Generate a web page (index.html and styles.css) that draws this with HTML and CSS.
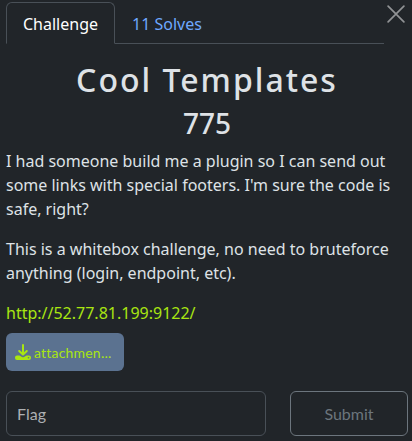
FILE: index.html
```html
<!DOCTYPE html>
<html lang="en">
<head>
<meta charset="utf-8">
<title>Cool Templates</title>
<link rel="stylesheet" href="styles.css">
</head>
<body>
<main class="modal">
  <button class="close" aria-label="Close"><svg viewBox="0 0 16 16"><path d="M1 1l14 14M15 1L1 15"/></svg></button>
  <nav class="tabs"><a class="tab active">Challenge</a><a class="tab">11 Solves</a></nav>
  <h2 class="name">Cool Templates</h2>
  <h3 class="value">775</h3>
  <div class="description">
    <p>I had someone build me a plugin so I can send out<br>some links with special footers. I'm sure the code is<br>safe, right?</p>
    <p>This is a whitebox challenge, no need to bruteforce<br>anything (login, endpoint, etc).</p>
    <p class="link">http://52.77.81.199:9122/</p>
  </div>
  <a class="file"><svg viewBox="0 0 16 16"><path class="arrow" d="M8 1v9M4.200 7L8 10.600 11.800 7"/><path fill-rule="evenodd" d="M2 11.500h2.500L7 13q1 .5 2 0l2.500-1.500H14a2 2 0 0 1 2 2v.5a2 2 0 0 1-2 2H2a2 2 0 0 1-2-2v-.5a2 2 0 0 1 2-2zM13.500 13a.8.8 0 1 0 0 1.600.8.8 0 0 0 0-1.600z"/></svg><span>attachmen...</span></a>
  <form class="submission"><input class="flag" placeholder="Flag" aria-label="Flag"><button class="submit" type="button">Submit</button></form>
</main>
</body>
</html>
```
FILE: styles.css
```css
* { box-sizing: border-box; }
body { margin: 0; background: #212529; color: #dee2e6; font: 16px/24px "Noto Sans", sans-serif; }
.modal { position: relative; width: 412px; height: 441px; padding: 2px 4px 0 6px; overflow: hidden; }
.close { position: absolute; top: 5px; right: 7px; width: 18px; height: 18px; padding: 0; border: 0; background: none; }
.close svg { display: block; width: 18px; height: 18px; fill: none; stroke: #919395; stroke-width: 1.5; stroke-linecap: round; }
.tabs { display: flex; width: 378px; height: 42px; border-bottom: 1px solid #495057; }
.tab { height: 42px; padding: 10px 17px; color: #6ea8fe; }
.active { padding: 9px 16px; border: 1px solid #495057; border-bottom-color: #212529; border-radius: 6px 6px 0 0; background: #212529; color: #fff; }
.name { margin: 17px 0 0; text-align: center; font: 500 32px/38px "Noto Sans", sans-serif; letter-spacing: 2px; }
.value { margin: 7px 0 9px; text-align: center; font: 500 28px/34px "Noto Sans", sans-serif; }
.description p { margin: 0 0 16px; white-space: nowrap; }
.description .link { margin-bottom: 8px; color: #a9e611; }
.file { display: flex; align-items: center; gap: 3px; width: 118px; height: 38px; padding: 0 9px; border-radius: 6px; background: #5b7290; color: #a9e611; font: 14px/21px Lato, sans-serif; letter-spacing: .2px; }
.file svg { width: 16px; height: 16px; fill: currentColor; }
.arrow { fill: none; stroke: currentColor; stroke-width: 2; stroke-linecap: round; stroke-linejoin: round; }
.submission { display: grid; grid-template-columns: 260px 118px; gap: 24px; margin-top: 20px; }
.flag, .submit { height: 45px; border: 1px solid #495057; border-radius: 6px; background: #212529; font: 16px/24px Lato, sans-serif; }
.flag { padding: 0 10px; }
.flag::placeholder { color: #adb0b3; opacity: 1; }
.submit { border-color: #6c757d; color: #6c757d; }
```
